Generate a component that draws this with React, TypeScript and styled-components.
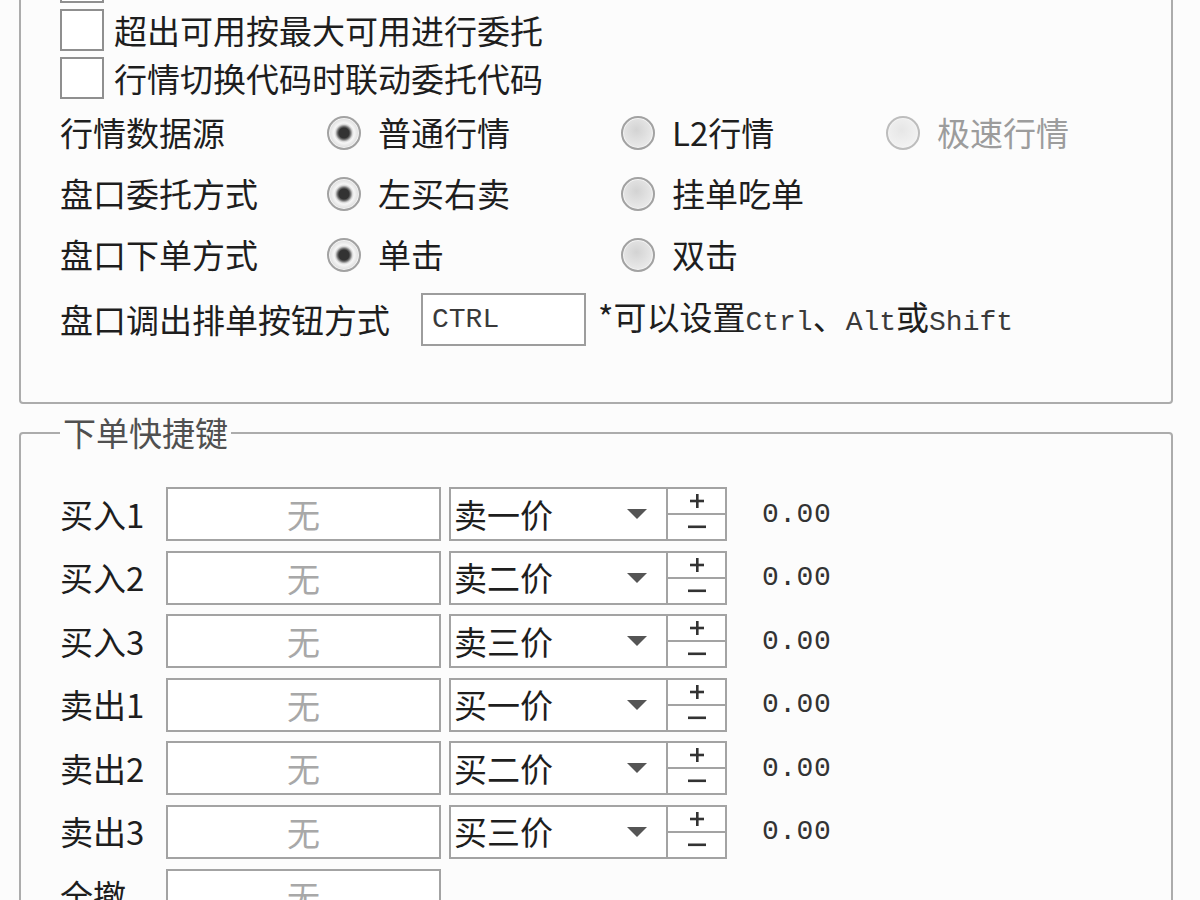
import React from "react";
import styled, { createGlobalStyle } from "styled-components";

const GlobalStyle = createGlobalStyle`
  html, body {
    margin: 0;
    padding: 0;
    background: #fcfcfc;
    overflow: hidden;
  }
  body {
    font-family: "Noto Sans CJK SC", "Noto Sans", sans-serif;
    color: #1e1e1e;
  }
`;

const Page = styled.div`
  margin-top: -44px;
  padding-left: 19px;
  width: 1154px;
  display: flex;
  flex-direction: column;
  gap: 12px;
`;

const Group = styled.fieldset<{ $padTop?: number; $padBottom?: number }>`
  margin: 0;
  padding: ${(p) => p.$padTop ?? 0}px 0 ${(p) => p.$padBottom ?? 0}px 39px;
  border: 2px solid #acacac;
  border-radius: 4px;
  min-width: 0;
  display: flex;
  flex-direction: column;
`;

const Legend = styled.legend`
  margin: 0;
  padding: 0 3px;
  font-size: 33px;
  line-height: 33px;
  color: #505050;
`;

const Text = styled.span<{ $muted?: boolean }>`
  font-size: 33px;
  line-height: 1;
  white-space: nowrap;
  color: ${(p) => (p.$muted ? "#9c9c9c" : "#1e1e1e")};
`;

const Mono = styled.span`
  font-family: "Liberation Mono", "DejaVu Sans Mono", monospace;
  font-size: 28px;
  color: #3a3a3a;
`;

/* ---------- checkbox rows ---------- */

const CheckRow = styled.label`
  height: 48px;
  display: flex;
  align-items: center;
  gap: 10px;
`;

const CheckBox = styled.span`
  width: 40px;
  height: 38px;
  border: 2px solid #8f8f8f;
  background: #ffffff;
  flex: none;
`;

/* ---------- radio rows ---------- */

const RadioRow = styled.div`
  height: 61px;
  display: grid;
  grid-template-columns: 267px 294px 265px 1fr;
  align-items: center;
`;

const Option = styled.label`
  display: flex;
  align-items: center;
  gap: 17px;
`;

const Dot = styled.span<{ $checked?: boolean; $disabled?: boolean }>`
  width: 30px;
  height: 30px;
  border-radius: 50%;
  flex: none;
  border: 2px solid ${(p) => (p.$disabled ? "#bdbdbd" : "#a2a2a2")};
  background: ${(p) =>
    p.$checked
      ? "radial-gradient(circle, #333 0 5px, #6e6e6e 6.5px, #d8d8d8 8.5px, #f6f6f6 10px, #dcdcdc 15px)"
      : p.$disabled
      ? "radial-gradient(circle at 45% 40%, #e6e6e6 0, #f0f0f0 60%, #f6f6f6 100%)"
      : "radial-gradient(circle at 45% 40%, #d3d3d3 0, #e4e4e4 55%, #f1f1f1 100%)"};
  box-shadow: inset 0 0 0 1px #f4f4f4;
`;

/* ---------- key option row ---------- */

const KeyRow = styled.div`
  height: 68px;
  display: flex;
  align-items: center;
`;

const KeyInput = styled.div`
  margin-left: 31px;
  height: 49px;
  width: 152px;
  border: 2px solid #9d9d9d;
  background: #fff;
  display: flex;
  align-items: center;
  padding-left: 9px;
`;

const Hint = styled.div`
  margin-left: 12px;
  display: flex;
  align-items: baseline;
`;

/* ---------- hotkey rows ---------- */

const HotkeyList = styled.div`
  display: flex;
  flex-direction: column;
  gap: 9.6px;
`;

const HotkeyRow = styled.div`
  height: 54px;
  display: flex;
  align-items: center;
`;

const RowLabel = styled.div`
  width: 106px;
  font-size: 33px;
  line-height: 1;
  white-space: nowrap;
`;

const KeyBox = styled.div`
  width: 271px;
  height: 50px;
  border: 2px solid #a3a3a3;
  background: #fff;
  display: flex;
  align-items: center;
  justify-content: center;
  font-size: 33px;
  color: #a8a8a8;
`;

const Select = styled.div`
  margin-left: 8px;
  width: 193px;
  height: 50px;
  border: 2px solid #a3a3a3;
  background: #fff;
  display: flex;
  align-items: center;
  justify-content: space-between;
  padding-left: 3px;
  padding-right: 19px;
`;

const Arrow = styled.span`
  width: 0;
  height: 0;
  border-left: 10px solid transparent;
  border-right: 10px solid transparent;
  border-top: 10px solid #555;
`;

const Spinner = styled.div`
  margin-left: -2px;
  width: 57px;
  height: 50px;
  border: 2px solid #a3a3a3;
  background: #fff;
  display: flex;
  flex-direction: column;
`;

const SpinHalf = styled.div<{ $top?: boolean }>`
  flex: 1;
  display: flex;
  align-items: center;
  justify-content: center;
  border-bottom: ${(p) => (p.$top ? "2px solid #a3a3a3" : "none")};
`;

const Value = styled.div`
  margin-left: 35px;
  font-family: "Liberation Mono", "DejaVu Sans Mono", monospace;
  font-size: 28px;
  color: #333;
  letter-spacing: 0.5px;
`;

const PlusIcon = () => (
  <svg width="14" height="14" viewBox="0 0 14 14">
    <rect x="6" y="0" width="2.6" height="14" fill="#333" />
    <rect x="0" y="5.7" width="14" height="2.6" fill="#333" />
  </svg>
);

const MinusIcon = () => (
  <svg width="18" height="4" viewBox="0 0 18 4">
    <rect x="0" y="0.5" width="18" height="2.6" fill="#333" />
  </svg>
);

type RadioOpt = { text: React.ReactNode; checked?: boolean; disabled?: boolean };

const radioRows: { label: string; options: RadioOpt[] }[] = [
  {
    label: "行情数据源",
    options: [
      { text: "普通行情", checked: true },
      { text: "L2行情" },
      { text: "极速行情", disabled: true },
    ],
  },
  {
    label: "盘口委托方式",
    options: [{ text: "左买右卖", checked: true }, { text: "挂单吃单" }],
  },
  {
    label: "盘口下单方式",
    options: [{ text: "单击", checked: true }, { text: "双击" }],
  },
];

const hotkeys = [
  { label: "买入1", price: "卖一价" },
  { label: "买入2", price: "卖二价" },
  { label: "买入3", price: "卖三价" },
  { label: "卖出1", price: "买一价" },
  { label: "卖出2", price: "买二价" },
  { label: "卖出3", price: "买三价" },
];

export default function App() {
  return (
    <>
      <GlobalStyle />
      <Page>
        <Group $padBottom={49}>
          <CheckRow>
            <CheckBox />
          </CheckRow>
          <CheckRow>
            <CheckBox />
            <Text>超出可用按最大可用进行委托</Text>
          </CheckRow>
          <CheckRow>
            <CheckBox />
            <Text>行情切换代码时联动委托代码</Text>
          </CheckRow>

          {radioRows.map((row) => (
            <RadioRow key={row.label}>
              <Text>{row.label}</Text>
              {row.options.map((o, i) => (
                <Option key={i}>
                  <Dot $checked={o.checked} $disabled={o.disabled} />
                  <Text $muted={o.disabled}>{o.text}</Text>
                </Option>
              ))}
            </RadioRow>
          ))}

          <KeyRow>
            <Text>盘口调出排单按钮方式</Text>
            <KeyInput>
              <Mono>CTRL</Mono>
            </KeyInput>
            <Hint>
              <Text>*可以设置</Text>
              <Mono>Ctrl</Mono>
              <Text>、</Text>
              <Mono>Alt</Mono>
              <Text>或</Text>
              <Mono>Shift</Mono>
            </Hint>
          </KeyRow>
        </Group>

        <Group $padTop={38} $padBottom={40}>
          <Legend>下单快捷键</Legend>
          <HotkeyList>
            {hotkeys.map((h) => (
              <HotkeyRow key={h.label}>
                <RowLabel>{h.label}</RowLabel>
                <KeyBox>无</KeyBox>
                <Select>
                  <Text>{h.price}</Text>
                  <Arrow />
                </Select>
                <Spinner>
                  <SpinHalf $top>
                    <PlusIcon />
                  </SpinHalf>
                  <SpinHalf>
                    <MinusIcon />
                  </SpinHalf>
                </Spinner>
                <Value>0.00</Value>
              </HotkeyRow>
            ))}
            <HotkeyRow>
              <RowLabel>全撤</RowLabel>
              <KeyBox>无</KeyBox>
            </HotkeyRow>
          </HotkeyList>
        </Group>
      </Page>
    </>
  );
}
